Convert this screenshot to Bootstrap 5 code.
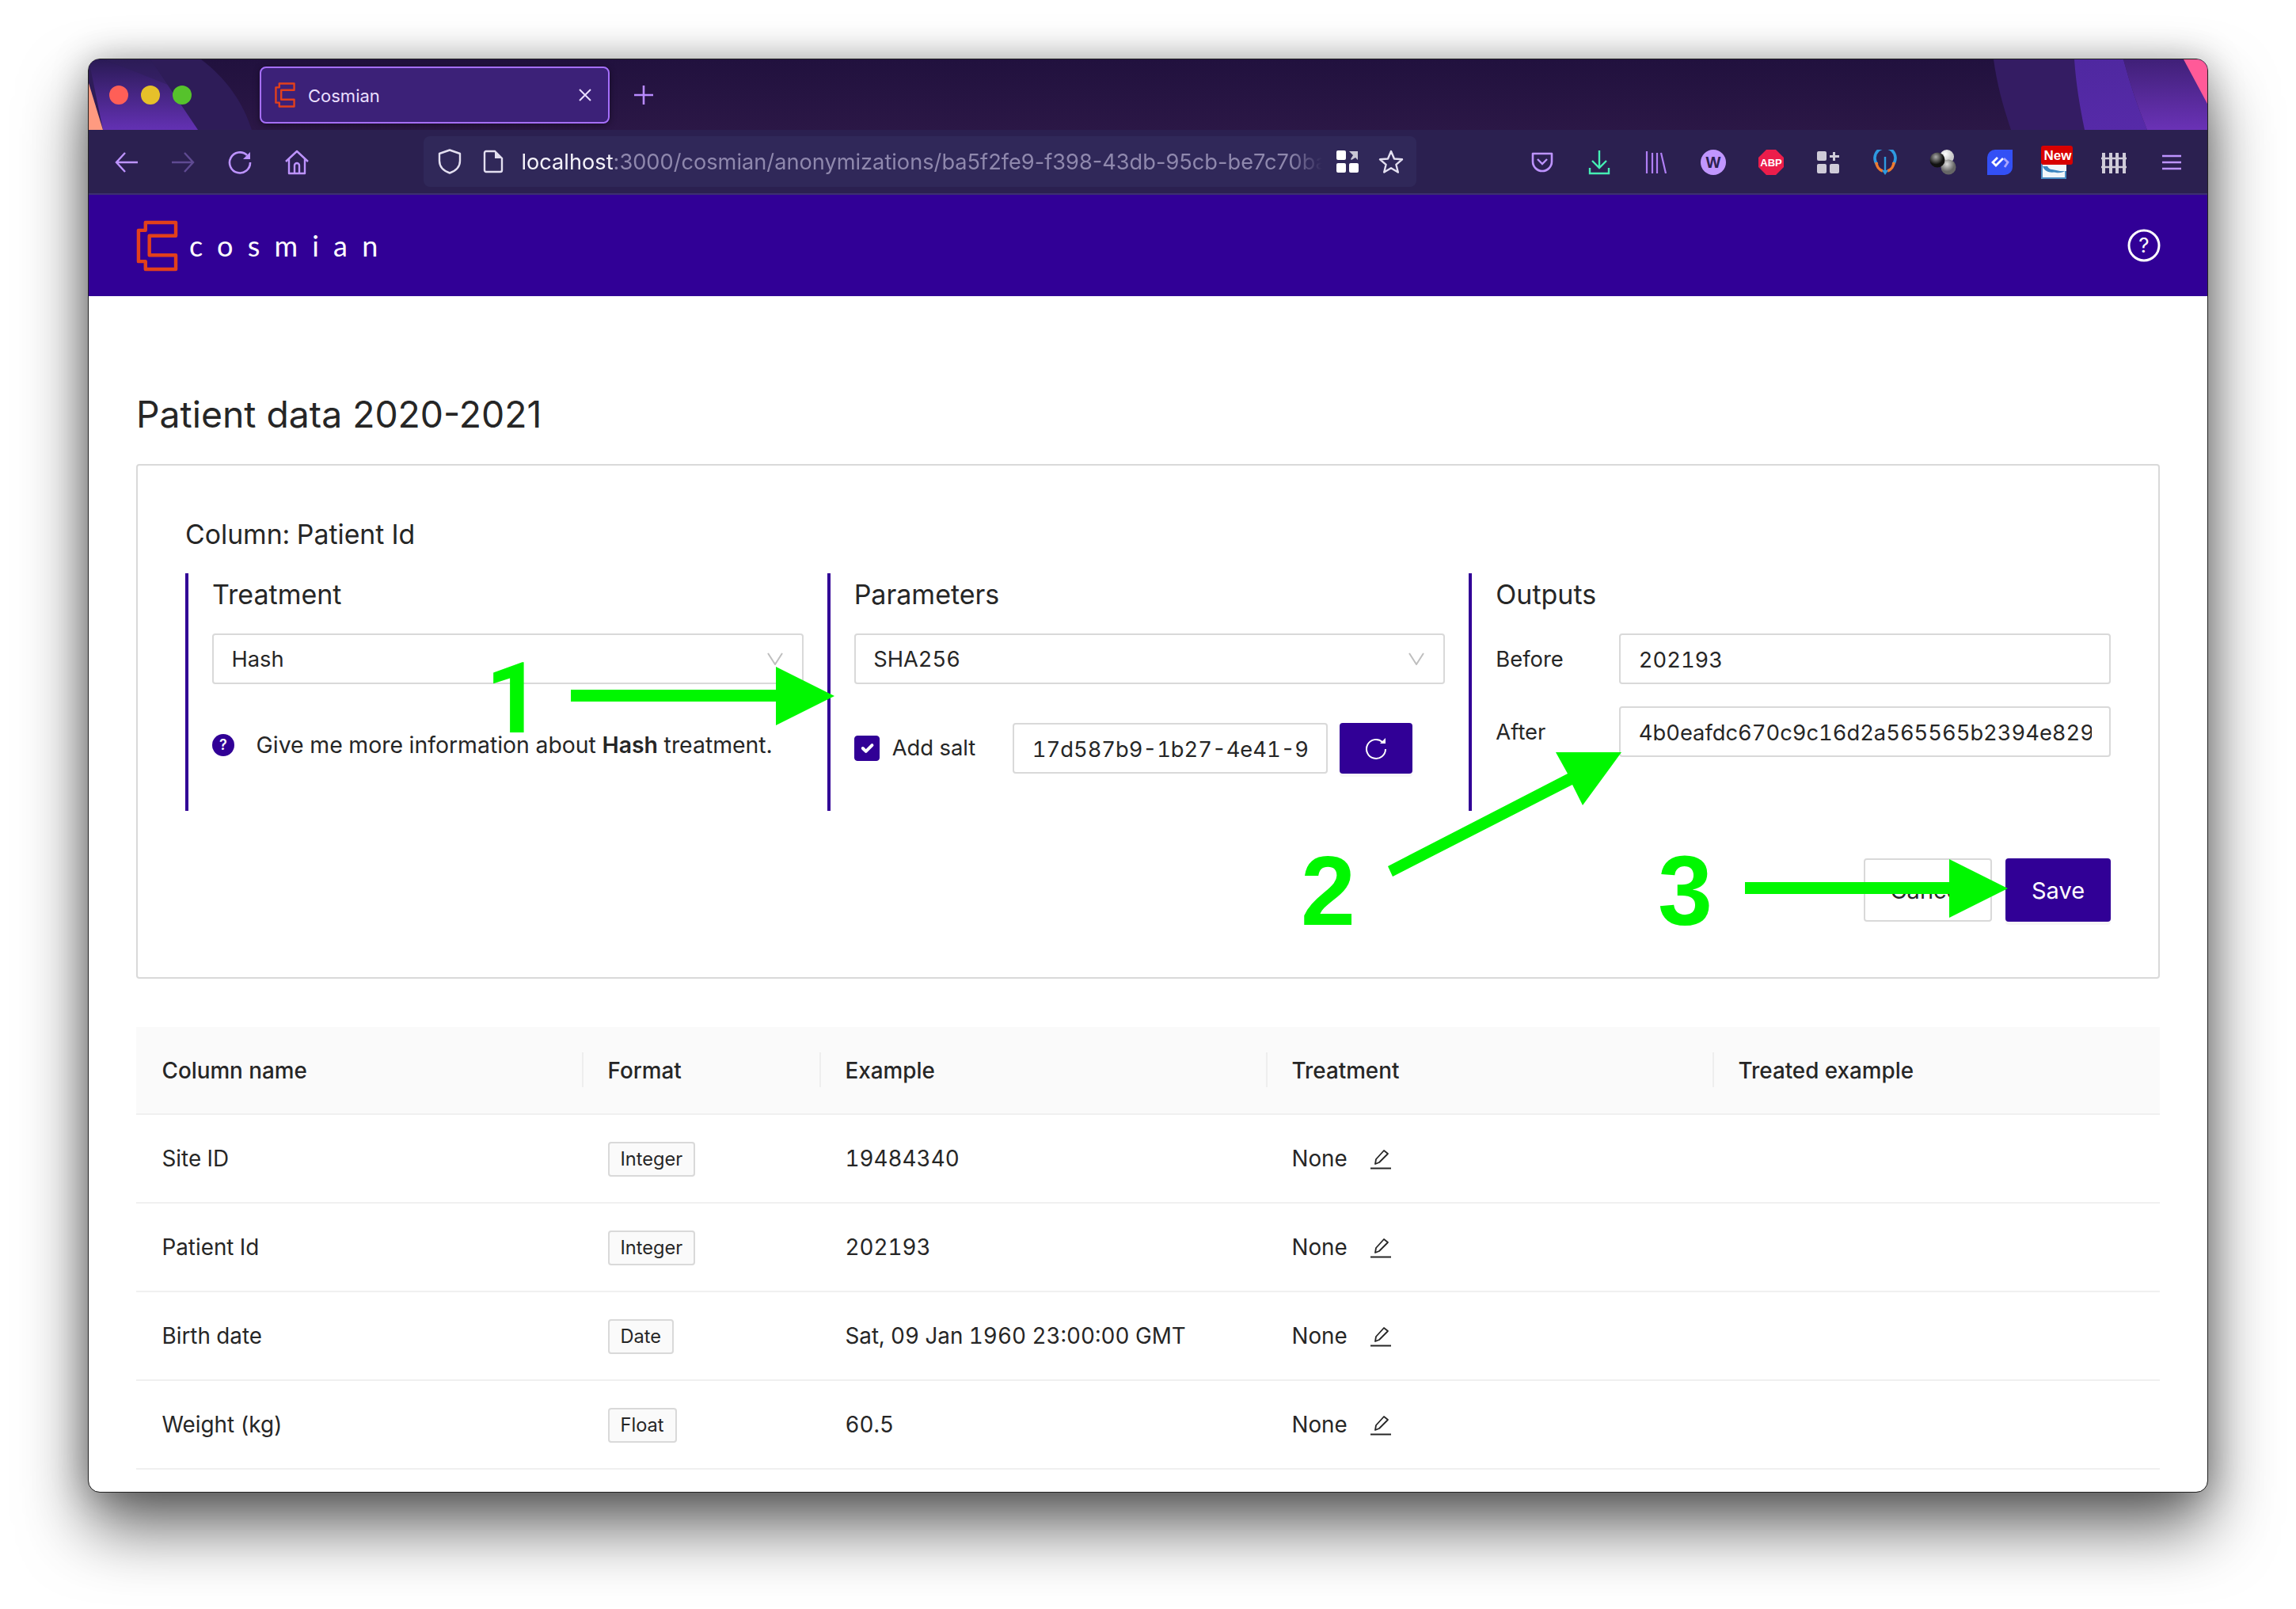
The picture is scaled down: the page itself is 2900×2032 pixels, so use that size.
<!doctype html>
<html lang="en"><head><meta charset="utf-8"><title>Cosmian</title>
<link href="https://cdn.jsdelivr.net/npm/bootstrap@5.3.0/dist/css/bootstrap.min.css" rel="stylesheet">
<style>
html,body{height:2032px;overflow:hidden;background:#fff}
body{font-family:Inter,"Liberation Sans",sans-serif;font-size:28px;color:#262626;line-height:1.5;font-feature-settings:"tnum"}
.stage{position:relative;width:2900px;height:2032px;padding:75px 112px 0}
.win{height:1809px;background:#fff;border-radius:14px;overflow:hidden;outline:1px solid #222;box-shadow:0 44px 84px rgba(0,0,0,.62),0 0 46px rgba(0,0,0,.28)}
.titlebar{position:relative;height:89px;background:linear-gradient(#21113e,#2b1746);overflow:hidden}
.decor{position:absolute;left:0;top:0}
.dots{position:relative;gap:16px;margin-left:26px}
.dot{width:24px;height:24px;border-radius:50%}
.tabx{position:relative;width:442px;height:72px;margin-left:86px;background:#3c2178;border:2px solid #a66ffb;border-radius:8px;padding:0 20px 0 17px;color:#eadfff;font-size:22px;box-shadow:0 2px 8px rgba(0,0,0,.4);font-feature-settings:normal}
.tabx span{padding-top:4px}
.plus{position:relative;margin-left:30px}
.toolbar{position:relative;height:82px;background:#2b2050;border-bottom:2px solid #3c3070;padding:2px 0 0 12px}
.tbtn{width:71.6px;height:64px;flex:none;display:flex;align-items:center;justify-content:center}
.urlbar{width:1254px;height:64px;margin-left:125px;margin-top:-2px;padding-left:5px;background:#302859;border-radius:8px;flex:none}
.urlbar .tbtn{width:55px}
.urltext{width:1012px;margin-left:8px;overflow:hidden;white-space:nowrap;color:#8f88ad;font-size:27.2px;font-feature-settings:normal;padding-top:2px;-webkit-mask-image:linear-gradient(90deg,#000 96%,transparent)}
.urltext b{font-weight:400;color:#f4f2fa}
.rightgrp{margin-left:122px}
.rightgrp .tbtn{width:72.3px}
.topnav.navbar{height:128px;background:#310096;padding:0 59px 0 60px}
.wordmark{font-family:Lato,"Open Sans",sans-serif;font-weight:400;font-size:36px;letter-spacing:18.2px;color:#fff;margin-left:14px;line-height:1}
.pagebody{padding:120px 60px 0 60px}
.pagetitle{font-size:46.3px;font-weight:400;line-height:58px;margin:0 0 34px;font-feature-settings:normal}
.panel{height:650px;border:2px solid #d9d9d9;border-radius:4px;padding:58px 60px 0 60px}
.coltitle{font-size:33.8px;font-weight:400;line-height:58px;margin:0 0 20px;height:58px}
.sect{height:300px;border-left:4px solid #310096;padding:0 30px 0 30px}
.sect.last{padding-right:0}
.secthead{font-size:34px;font-weight:400;line-height:50px;margin:2px 0 24px}
.form-control.fld,.form-select.fld{height:64px;font-size:27.3px;color:#262626;border:2px solid #d9d9d9;border-radius:4px;padding:2px 22px 0 22.5px;box-shadow:none;font-feature-settings:"tnum"}
.form-select.fld{background-image:url("data:image/svg+xml,%3Csvg xmlns='http://www.w3.org/2000/svg' viewBox='0 0 20 16'%3E%3Cpath d='M1 1l9 14 9-14' fill='none' stroke='%23bfbfbf' stroke-width='2'/%3E%3C/svg%3E");background-size:20px 16px;background-position:right 24px center}
.infoline{margin-top:56px;gap:16px;font-size:28.4px}
.saltline{margin-top:49px;font-size:27.4px}
.saltbox{height:64px;width:398px;flex:none}
.saltgap{width:41px;flex:none}
.form-check-input.salt{width:32px;height:32px;margin:0;border-radius:4px;background-color:#310096;border-color:#310096;background-size:26px}
.refreshbtn{width:92px;height:64px;background:#310096;border:0;border-radius:4px;margin-left:15px;box-shadow:0 4px 0 rgba(0,0,0,.03)}
.outlabel{width:156px;flex:none;font-size:27.4px;padding-top:2px}
.outrow{margin-bottom:28px}
.actions{margin-top:60px;gap:17px}
.btnx{height:80px;font-size:29px;border-radius:4px;padding:2px 0 0}
.btn-cancel{width:162px;background:#fff;border:2px solid #d9d9d9;color:#262626}
.btn-save{width:133px;background:#310096;border:0;color:#fff;box-shadow:0 4px 0 rgba(0,0,0,.03)}
.datatable{table-layout:fixed;width:2556px;margin:61px 0 0;--bs-table-color:#262626;font-size:27.8px}
.datatable th,.datatable td{border-bottom:2px solid #f0f0f0;padding:2px 32px 0 32.5px;vertical-align:middle;height:112px;font-weight:400}
.datatable thead th{position:relative;height:110px;background:#fafafa;font-weight:450}
.datatable thead th+th::before{content:"";position:absolute;left:0;top:32px;width:2px;height:44px;background:#eeeeee}
.w-a{width:563px}.w-b{width:300px}.w-c{width:564px}
.tagpill{display:inline-flex;align-items:center;height:44px;padding:0 14px;background:#fafafa;border:2px solid #d9d9d9;border-radius:4px;font-size:23.6px}
.editcell{gap:29px}
.anno{position:absolute;left:0;top:0;pointer-events:none}
.num{position:absolute;font-family:"Liberation Sans",Arial,sans-serif;font-weight:700;font-size:124px;line-height:1;color:#00f700;font-feature-settings:normal}
.n1{font-family:Roboto,"Liberation Sans",sans-serif;left:613px;top:821px}.n2{left:1643px;top:1063px}.n3{left:2094px;top:1063px}
</style></head><body>
<div class="stage">
<div class="win d-flex flex-column">
  <div class="titlebar d-flex align-items-center">
    <svg class="decor" width="2676" height="89" viewBox="0 0 2676 89">
      <defs><linearGradient id="gb" x1="0" y1="0" x2="0" y2="1"><stop offset="0" stop-color="#2a1a55"/><stop offset="1" stop-color="#6331b3"/></linearGradient>
      <linearGradient id="gc" x1="0" y1="0" x2="0" y2="1"><stop offset="0" stop-color="#402078"/><stop offset="1" stop-color="#6a32b6"/></linearGradient>
      <linearGradient id="gd" x1="0" y1="0" x2="0" y2="1"><stop offset="0" stop-color="#4f28a0"/><stop offset="1" stop-color="#562aa8"/></linearGradient></defs>
      <path d="M0 0H142C175 25 195 55 206 89H0Z" fill="#2e1c58"/>
      <path d="M0 0H78L138 89H18Z" fill="url(#gb)"/>
      <path d="M0 0H78L100 32 20 0Z" fill="#2e1d58" opacity=".5"/>
      <path d="M0 30L18 89H0Z" fill="#ff9a80"/>
      <path d="M2406 0H2676V89H2428C2418 60 2410 30 2406 0Z" fill="#341c63"/>
      <path d="M2508 0H2570C2578 30 2588 60 2600 89H2521C2515 60 2510 30 2508 0Z" fill="url(#gd)"/>
      <path d="M2570 0H2676V89H2600C2588 60 2578 30 2570 0Z" fill="url(#gc)"/>
      <path d="M2646 0H2676V56Z" fill="#ff5a98"/>
    </svg>
    <div class="dots d-flex">
      <div class="dot" style="background:#ff5f57"></div><div class="dot" style="background:#e6c02a"></div><div class="dot" style="background:#56c22c"></div>
    </div>
    <div class="tabx d-flex align-items-center">
      <svg width="26" height="32" viewBox="0 0 54 66"><path d="M12 3H51V20H17V45H51V63H12V53H3V13H12Z" fill="none" stroke="#e2401b" stroke-width="5" stroke-linejoin="round"/></svg>
      <span class="ms-3 flex-grow-1">Cosmian</span>
      <svg width="18" height="18" viewBox="0 0 18 18"><path d="M2 2l14 14M16 2L2 16" stroke="#e9deff" stroke-width="2"/></svg>
    </div>
    <svg class="plus" width="26" height="26" viewBox="0 0 26 26"><path d="M13 1v24M1 13h24" stroke="#b98aff" stroke-width="2.6"/></svg>
  </div>

  <div class="toolbar d-flex align-items-center">
    <div class="tbtn"><svg width="30" height="26" viewBox="0 0 30 26"><path d="M29 13H2M13 1L2 13l11 12" fill="none" stroke="#bd93ff" stroke-width="2.4"/></svg></div>
    <div class="tbtn"><svg width="30" height="26" viewBox="0 0 30 26"><path d="M1 13h27M17 1l11 12-11 12" fill="none" stroke="#5f4a92" stroke-width="2.4"/></svg></div>
    <div class="tbtn"><svg width="30" height="30" viewBox="0 0 30 30"><path d="M24 6A13 13 0 1 0 28 15" fill="none" stroke="#bd93ff" stroke-width="2.6"/><path d="M19 11L28 2v9Z" fill="#bd93ff"/></svg></div>
    <div class="tbtn"><svg width="32" height="32" viewBox="0 0 32 32"><path d="M2 15L16 2l14 13M6 12v18h20V12M13 30V20a3 3 0 0 1 6 0v10" fill="none" stroke="#bd93ff" stroke-width="2.4" stroke-linejoin="round"/></svg></div>
    <div class="urlbar d-flex align-items-center">
      <div class="tbtn"><svg width="30" height="32" viewBox="0 0 30 32"><path d="M15 1.5L28 6v9c0 8-6 13-13 15.5C8 28 2 23 2 15V6Z" fill="none" stroke="#e3dff0" stroke-width="2.4" stroke-linejoin="round"/></svg></div>
      <div class="tbtn"><svg width="26" height="30" viewBox="0 0 26 30"><path d="M2 4a2 2 0 0 1 2-2h11l9 9v15a2 2 0 0 1-2 2H4a2 2 0 0 1-2-2Z" fill="none" stroke="#e3dff0" stroke-width="2.4"/><path d="M15 2l9 9h-9Z" fill="#e3dff0"/></svg></div>
      <div class="urltext"><b>localhost</b>:3000/cosmian/anonymizations/ba5f2fe9-f398-43db-95cb-be7c70ba7d</div>
      <div class="tbtn ms-1"><svg width="28" height="28" viewBox="0 0 28 28"><rect x="0" y="0" width="12" height="12" rx="2" fill="#fff"/><path d="M16 1h11v11l-3-3-5 3-1-1 3-5Z" fill="#c9c6d4"/><rect x="0" y="16" width="12" height="12" rx="2" fill="#fff"/><rect x="16" y="16" width="12" height="12" rx="2" fill="#fff"/></svg></div>
      <div class="tbtn"><svg width="32" height="30" viewBox="0 0 32 30"><path d="M16 2l4 9.5 10 .8-7.600 6.500 2.400 9.700L16 23.300 7.200 28.500l2.400-9.700L2 12.300l10-.8Z" fill="none" stroke="#e3dff0" stroke-width="2.400" stroke-linejoin="round"/></svg></div>
    </div>
    <div class="rightgrp d-flex align-items-center">
      <div class="tbtn"><svg width="28" height="26" viewBox="0 0 28 26"><path d="M2 2h24v10a12 12 0 0 1-24 0Z" fill="none" stroke="#bd93ff" stroke-width="2.600" stroke-linejoin="round"/><path d="M8 9l6 6 6-6" fill="none" stroke="#bd93ff" stroke-width="2.400"/></svg></div>
      <div class="tbtn"><svg width="28" height="32" viewBox="0 0 28 32"><path d="M14 1v21M5 14l9 9 9-9" fill="none" stroke="#45eeb4" stroke-width="2.400"/><path d="M2 23v7h24v-7" fill="none" stroke="#45eeb4" stroke-width="2.400"/></svg></div>
      <div class="tbtn"><svg width="28" height="28" viewBox="0 0 28 28"><path d="M2 0v28M9 2v26M15 2v26M20 2l6 26" fill="none" stroke="#b07ff5" stroke-width="2.200"/></svg></div>
      <div class="tbtn"><svg width="32" height="32" viewBox="0 0 32 32"><circle cx="16" cy="16" r="16" fill="#c196ff"/><text x="16" y="23" text-anchor="middle" font-family="Liberation Sans" font-weight="700" font-size="20" fill="#2b2050">W</text></svg></div>
      <div class="tbtn"><svg width="32" height="32" viewBox="0 0 32 32"><path d="M10 0h12l10 10v12L22 32H10L0 22V10Z" fill="#ec1d4b"/><text x="16" y="21" text-anchor="middle" font-family="Liberation Sans" font-weight="700" font-size="13" fill="#fff">ABP</text></svg></div>
      <div class="tbtn"><svg width="28" height="28" viewBox="0 0 28 28"><rect width="12" height="12" rx="2" fill="#cfcbd8"/><path d="M20 1h3v4h5v3h-5v4h-3V8h-4V5h4Z" fill="#cfcbd8"/><rect y="16" width="12" height="12" rx="2" fill="#cfcbd8"/><rect x="16" y="16" width="12" height="12" rx="2" fill="#cfcbd8"/></svg></div>
      <div class="tbtn"><svg width="30" height="32" viewBox="0 0 30 32"><path d="M5 19A13 13 0 1 1 25 19" fill="none" stroke="#2e9ae0" stroke-width="3.600"/><path d="M4 16A12 12 0 0 0 12 27M26 16A12 12 0 0 1 18 27" fill="none" stroke="#ef7a2e" stroke-width="3.600"/><path d="M15 9v17" stroke="#2e9ae0" stroke-width="2.400"/><path d="M11 26h8l-4 6Z" fill="#2e9ae0"/></svg></div>
      <div class="tbtn"><svg width="34" height="32" viewBox="0 0 34 32"><defs><radialGradient id="w1" cx=".4" cy=".3"><stop offset="0" stop-color="#fff"/><stop offset="1" stop-color="#c8c8c8"/></radialGradient><radialGradient id="g1" cx=".4" cy=".3"><stop offset="0" stop-color="#ddd"/><stop offset="1" stop-color="#666"/></radialGradient><radialGradient id="k1" cx=".4" cy=".3"><stop offset="0" stop-color="#aaa"/><stop offset="1" stop-color="#111"/></radialGradient></defs><circle cx="22" cy="9" r="9" fill="url(#w1)"/><circle cx="24" cy="22" r="9.500" fill="url(#g1)"/><circle cx="10" cy="13" r="9.500" fill="url(#k1)"/></svg></div>
      <div class="tbtn"><svg width="32" height="32" viewBox="0 0 32 32"><path d="M0 10A10 10 0 0 1 10 0h22v22a10 10 0 0 1-10 10H0Z" fill="#3350f5"/><path d="M13 10l-6 6 4 4 9-9" fill="none" stroke="#fff" stroke-width="2.800"/><path d="M21 11l5 5-4 6" fill="none" stroke="#a9a6ff" stroke-width="2.800"/></svg></div>
      <div class="tbtn"><svg width="40" height="42" viewBox="0 0 40 42"><rect y="22" width="32" height="20" fill="#4a8dc4"/><path d="M2 24h30v8H14c6 4 14 2 16 0v8H2Z" fill="#f2f6fa"/><path d="M2 26c4 10 14 8 22 6l-10-2c-3 0-5-2-6-4Z" fill="#3c86c0"/><rect width="40" height="24" rx="3" fill="#d80000"/><text x="21" y="18" text-anchor="middle" font-family="Liberation Sans" font-weight="700" font-size="17" fill="#fff">New</text></svg></div>
      <div class="tbtn"><svg width="32" height="28" viewBox="0 0 32 28"><path d="M3 2v26M12 2v26M20 2v26M29 2v26" stroke="#cfcbd8" stroke-width="4"/><path d="M0 9h32M0 20h32" stroke="#cfcbd8" stroke-width="2.600"/></svg></div>
      <div class="tbtn"><svg width="26" height="20" viewBox="0 0 26 20"><path d="M1 2h24M1 10h24M1 18h24" stroke="#bd93ff" stroke-width="2.600"/></svg></div>
    </div>
  </div>

  <nav class="navbar topnav">
    <div class="d-flex align-items-center">
      <svg width="53" height="65" viewBox="0 0 54 66"><path d="M12 3H51V20H17V45H51V63H12V53H3V13H12Z" fill="none" stroke="#e2401b" stroke-width="4.500" stroke-linejoin="round"/></svg>
      <span class="wordmark">cosmian</span>
    </div>
    <svg width="42" height="42" viewBox="0 0 42 42"><circle cx="21" cy="21" r="19" fill="none" stroke="#fff" stroke-width="3"/><text x="21" y="30" text-anchor="middle" font-family="Inter" font-size="26" fill="#fff">?</text></svg>
  </nav>

  <div class="pagebody">
    <h1 class="pagetitle">Patient data 2020-2021</h1>
    <div class="panel">
      <h2 class="coltitle">Column: Patient Id</h2>
      <div class="row g-0">
        <div class="col-4 sect">
          <h3 class="secthead">Treatment</h3>
          <select class="form-select fld"><option>Hash</option></select>
          <div class="infoline d-flex align-items-center">
            <svg width="28" height="28" viewBox="0 0 28 28" class="flex-none"><circle cx="14" cy="14" r="14" fill="#310096"/><text x="14" y="20" text-anchor="middle" font-family="Inter" font-weight="600" font-size="18" fill="#fff">?</text></svg>
            <span class="ms-1">&nbsp;Give me more information about <strong class="fw-semibold">Hash</strong> treatment.</span>
          </div>
        </div>
        <div class="col-4 sect">
          <h3 class="secthead">Parameters</h3>
          <select class="form-select fld"><option>SHA256</option></select>
          <div class="saltline d-flex align-items-center">
            <input class="form-check-input salt" type="checkbox" checked aria-label="Add salt">
            <span class="ms-3 me-auto">Add salt</span>
            <input class="form-control fld saltbox" readonly value="17d587b9-1b27-4e41-9213-7ac14e52c890">
            <button class="btn refreshbtn d-flex align-items-center justify-content-center" aria-label="Refresh"><svg width="28" height="30" viewBox="0 0 28 30"><path d="M22 7A12 12 0 1 0 26 16" fill="none" stroke="#fff" stroke-width="2"/><path d="M19 9l7-7v7Z" fill="#fff"/></svg></button>
            <span class="saltgap"></span>
          </div>
        </div>
        <div class="col-4 sect last">
          <h3 class="secthead">Outputs</h3>
          <div class="outrow d-flex align-items-center"><span class="outlabel">Before</span><input class="form-control fld" readonly value="202193"></div>
          <div class="outrow d-flex align-items-center"><span class="outlabel">After</span><input class="form-control fld" readonly value="4b0eafdc670c9c16d2a565565b2394e829f1c7a0"></div>
        </div>
      </div>
      <div class="actions d-flex justify-content-end">
        <button class="btn btnx btn-cancel">Cancel</button>
        <button class="btn btnx btn-save">Save</button>
      </div>
    </div>

    <table class="table datatable">
      <colgroup><col class="w-a"><col class="w-b"><col class="w-c"><col class="w-c"><col></colgroup>
      <thead><tr><th>Column name</th><th>Format</th><th>Example</th><th>Treatment</th><th>Treated example</th></tr></thead>
      <tbody>
        <tr><td>Site ID</td><td><span class="tagpill">Integer</span></td><td>19484340</td><td><div class="d-flex align-items-center editcell">None<svg width="26" height="26" viewBox="0 0 26 26"><path d="M6 19l1-6L17 2l5 4-11 11Z" fill="none" stroke="#262626" stroke-width="1.800" stroke-linejoin="round"/><path d="M0 24.500h26" stroke="#262626" stroke-width="2"/></svg></div></td><td></td></tr>
        <tr><td>Patient Id</td><td><span class="tagpill">Integer</span></td><td>202193</td><td><div class="d-flex align-items-center editcell">None<svg width="26" height="26" viewBox="0 0 26 26"><path d="M6 19l1-6L17 2l5 4-11 11Z" fill="none" stroke="#262626" stroke-width="1.800" stroke-linejoin="round"/><path d="M0 24.500h26" stroke="#262626" stroke-width="2"/></svg></div></td><td></td></tr>
        <tr><td>Birth date</td><td><span class="tagpill">Date</span></td><td>Sat, 09 Jan 1960 23:00:00 GMT</td><td><div class="d-flex align-items-center editcell">None<svg width="26" height="26" viewBox="0 0 26 26"><path d="M6 19l1-6L17 2l5 4-11 11Z" fill="none" stroke="#262626" stroke-width="1.800" stroke-linejoin="round"/><path d="M0 24.500h26" stroke="#262626" stroke-width="2"/></svg></div></td><td></td></tr>
        <tr><td>Weight (kg)</td><td><span class="tagpill">Float</span></td><td>60.5</td><td><div class="d-flex align-items-center editcell">None<svg width="26" height="26" viewBox="0 0 26 26"><path d="M6 19l1-6L17 2l5 4-11 11Z" fill="none" stroke="#262626" stroke-width="1.800" stroke-linejoin="round"/><path d="M0 24.500h26" stroke="#262626" stroke-width="2"/></svg></div></td><td></td></tr>
      </tbody>
    </table>
  </div>
</div>

<svg class="anno" width="2900" height="2032" viewBox="0 0 2900 2032">
  <path d="M721 871H980V842L1054 879 980 916V886H721Z" fill="#00f700"/>
  <path d="M1753 1094L1980 977 1965 950H2048L1999 1017 1986 991 1759 1107Z" fill="#00f700"/>
  <path d="M2204 1114H2462V1085L2536 1122 2462 1159V1129H2204Z" fill="#00f700"/>
</svg>
<div class="num n1">1</div><div class="num n2">2</div><div class="num n3">3</div>
</div>
</body></html>
